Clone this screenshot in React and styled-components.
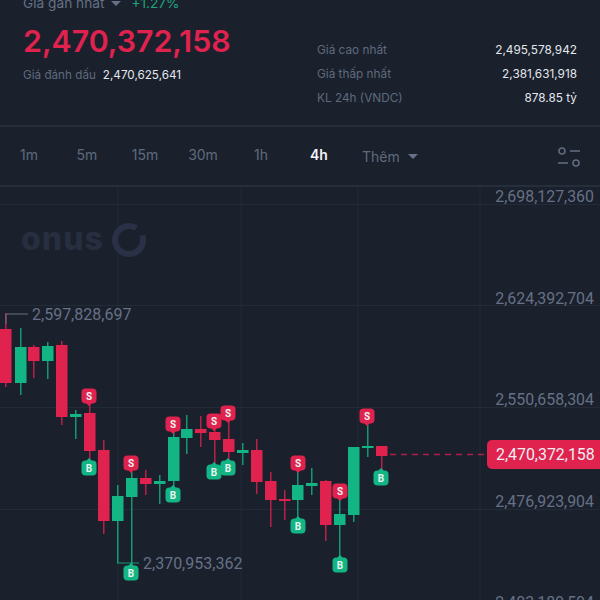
import React from "react";
import styled, { createGlobalStyle } from "styled-components";

const GlobalStyle = createGlobalStyle`
  html, body {
    margin: 0;
    padding: 0;
    width: 600px;
    height: 600px;
    overflow: hidden;
    background: #1a202c;
  }
`;

const Screen = styled.div`
  width: 600px;
  height: 600px;
  overflow: hidden;
  background: #1a202c;
  font-family: Inter, "Noto Sans", sans-serif;
  display: flex;
  flex-direction: column;
`;

const Header = styled.header`
  height: 127px;
  flex: none;
  box-sizing: border-box;
  padding: 0 23px 0 23px;
  display: flex;
  justify-content: space-between;
  border-bottom: 2px solid #262e3c;
`;

const PriceBlock = styled.div`
  display: flex;
  flex-direction: column;
`;

const LastRow = styled.div`
  display: flex;
  align-items: center;
  gap: 7px;
  height: 16px;
  margin-top: -5px;
  font-size: 13.7px;
  color: #667185;
`;

const Caret = styled.span`
  width: 0;
  height: 0;
  border-left: ${(p) => p.$size}px solid transparent;
  border-right: ${(p) => p.$size}px solid transparent;
  border-top: ${(p) => p.$size}px solid #667185;
`;

const Change = styled.span`
  color: #1aa57d;
  margin-left: 3px;
`;

const BigPrice = styled.div`
  margin-top: 12px;
  font-size: 30.3px;
  line-height: 36px;
  font-weight: 600;
  color: #e0224f;
`;

const MarkRow = styled.div`
  display: flex;
  gap: 7px;
  margin-top: 8px;
  font-size: 11.7px;
  line-height: 16px;
`;

const Dim = styled.span`
  color: #5f6b7d;
`;

const Value = styled.span`
  color: #e4e7ec;
`;

const Stats = styled.div`
  width: 260px;
  margin-top: 42px;
  display: flex;
  flex-direction: column;
  gap: 8px;
`;

const StatRow = styled.div`
  display: flex;
  justify-content: space-between;
  font-size: 11.8px;
  line-height: 16px;
`;

const TabBar = styled.nav`
  height: 60px;
  flex: none;
  box-sizing: border-box;
  display: flex;
  align-items: center;
  padding: 0 19px 4px 0;
  border-bottom: 2px solid #262e3c;
`;

const Tab = styled.span`
  width: 58px;
  text-align: center;
  font-size: 14px;
  font-weight: ${(p) => (p.$active ? 600 : 400)};
  color: ${(p) => (p.$active ? "#f2f4f7" : "#5f6b7d")};
`;

const More = styled.span`
  margin: 4px 0 0 14px;
  display: flex;
  align-items: center;
  gap: 8px;
  font-size: 14px;
  color: #5f6b7d;
`;

const FilterIcon = styled.svg`
  margin: 6px 0 0 auto;
  display: block;
`;

const Chart = styled.div`
  position: relative;
  flex: 1;
`;

const ChartSvg = styled.svg`
  display: block;
`;

const Axis = styled.div`
  position: absolute;
  top: 0;
  right: 6px;
  display: flex;
  flex-direction: column;
  align-items: flex-end;
  gap: 82.5px;
  font-family: Roboto, sans-serif;
  font-size: 15.9px;
  line-height: 19px;
  color: #667185;
`;

const PriceTag = styled.div`
  position: absolute;
  top: 253px;
  left: 487px;
  width: 113px;
  height: 29px;
  box-sizing: border-box;
  padding-left: 9px;
  border-radius: 5px 0 0 5px;
  background: #e0224f;
  color: #eceef2;
  font-family: Roboto, sans-serif;
  font-size: 15.9px;
  line-height: 29px;
`;

const Watermark = styled.div`
  position: absolute;
  top: 32px;
  left: 21px;
  font-family: Inter, sans-serif;
  font-size: 32px;
  line-height: 40px;
  font-weight: 800;
  letter-spacing: 1px;
  color: #272e3f;
`;

const RED = "#e0224f";
const GREEN = "#14b585";
const TOP = 187;

// x, body top, body bottom, wick top, wick bottom (page coordinates)
const candles = [
  [0, 329, 383, 313, 387, "r"],
  [15, 347, 383, 328, 395, "g"],
  [28, 347, 361, 345, 378, "r"],
  [42, 346, 361, 342, 379, "g"],
  [56, 345, 417, 341, 425, "r"],
  [70, 414, 417, 410, 439, "g"],
  [84, 413, 451, 403, 461, "r"],
  [98, 450, 521, 440, 534, "r"],
  [112, 496, 521, 485, 563, "g"],
  [126, 478, 497, 472, 568, "g"],
  [140, 478, 484, 470, 495, "r"],
  [154, 481, 484, 475, 504, "g"],
  [168, 437, 481, 431, 488, "g"],
  [181, 429, 438, 415, 454, "g"],
  [195, 429, 433, 416, 447, "r"],
  [209, 432, 440, 425, 468, "r"],
  [223, 439, 452, 418, 462, "r"],
  [237, 450, 453, 443, 465, "g"],
  [251, 450, 482, 439, 494, "r"],
  [265, 481, 500, 472, 527, "r"],
  [279, 499, 501, 490, 520, "r"],
  [292, 485, 500, 470, 522, "g"],
  [306, 483, 486, 468, 495, "g"],
  [320, 481, 525, 480, 541, "r"],
  [334, 514, 525, 498, 562, "g"],
  [348, 447, 515, 447, 522, "g"],
  [362, 446, 448, 425, 457, "g"],
  [376, 446, 456, 446, 470, "r"],
];

const badges = [
  [89, 396, "S"], [89, 468, "B"], [131, 463, "S"], [131, 573, "B"],
  [173, 424, "S"], [173, 495, "B"], [214, 421, "S"], [214, 472, "B"],
  [228, 413, "S"], [228, 468, "B"], [298, 463, "S"], [298, 526, "B"],
  [340, 491, "S"], [340, 565, "B"], [367, 416, "S"], [381, 478, "B"],
];

const Candle = ({ c }) => {
  const [x, top, bottom, wickTop, wickBottom, kind] = c;
  const color = kind === "r" ? RED : GREEN;
  return (
    <g fill={color}>
      <rect x={x + 5} y={wickTop - TOP} width="1.5" height={wickBottom - wickTop} opacity="0.8" />
      <rect x={x} y={top - TOP} width="11.5" height={bottom - top} />
    </g>
  );
};

// small rounded flag with a little point towards its candle
const Badge = ({ b }) => {
  const [x, y, label] = b;
  const sell = label === "S";
  const cy = y - TOP;
  return (
    <g>
      <rect x={x - 7.5} y={cy - 7.5} width="15" height="15" rx="4" fill={sell ? RED : GREEN} />
      <path
        d={sell ? `M${x - 3} ${cy + 7}L${x} ${cy + 10}L${x + 3} ${cy + 7}Z` : `M${x - 3} ${cy - 7}L${x} ${cy - 10}L${x + 3} ${cy - 7}Z`}
        fill={sell ? RED : GREEN}
      />
      <text x={x} y={cy + 3.5} textAnchor="middle" fontFamily="Roboto, sans-serif" fontSize="10" fontWeight="700" fill="#e8f3ef">
        {label}
      </text>
    </g>
  );
};

const stats = [
  ["Giá cao nhất", "2,495,578,942"],
  ["Giá thấp nhất", "2,381,631,918"],
  ["KL 24h (VNDC)", "878.85 tỷ"],
];

const tabs = ["1m", "5m", "15m", "30m", "1h", "4h"];
const axis = ["2,698,127,360", "2,624,392,704", "2,550,658,304", "2,476,923,904", "2,403,189,504"];

export default function App() {
  return (
    <Screen>
      <GlobalStyle />
      <Header>
        <PriceBlock>
          <LastRow>
            Giá gần nhất <Caret $size={5} /> <Change>+1.27%</Change>
          </LastRow>
          <BigPrice>2,470,372,158</BigPrice>
          <MarkRow>
            <Dim>Giá đánh dấu</Dim>
            <Value>2,470,625,641</Value>
          </MarkRow>
        </PriceBlock>
        <Stats>
          {stats.map(([label, value]) => (
            <StatRow key={label}>
              <Dim>{label}</Dim>
              <Value>{value}</Value>
            </StatRow>
          ))}
        </Stats>
      </Header>

      <TabBar>
        {tabs.map((t) => (
          <Tab key={t} $active={t === "4h"}>{t}</Tab>
        ))}
        <More>
          Thêm <Caret $size={5} />
        </More>
        <FilterIcon width="24" height="22" viewBox="0 0 24 22" fill="none" stroke="#5f6b7d" strokeWidth="1.6">
          <circle cx="5" cy="5" r="3" />
          <path d="M13 5h10" />
          <path d="M1 17h10" />
          <circle cx="19" cy="17" r="3" />
        </FilterIcon>
      </TabBar>

      <Chart>
        <ChartSvg width="600" height="413" viewBox="0 0 600 413">
          <g stroke="#232a38" strokeWidth="1">
            {[118, 241, 358, 480].map((x) => (
              <line key={x} x1={x} y1="0" x2={x} y2="413" />
            ))}
            {[17, 118, 220, 322].map((y) => (
              <line key={y} x1="0" y1={y + 0.5} x2="600" y2={y + 0.5} />
            ))}
          </g>
          <circle
            cx="129"
            cy="53"
            r="14"
            fill="none"
            stroke="#2a3146"
            strokeWidth="6"
            strokeDasharray="78 10"
            transform="rotate(-20 129 53)"
          />
          {candles.map((c) => (
            <Candle key={c[0]} c={c} />
          ))}
          <path d="M6 137V127H28" fill="none" stroke="#667185" strokeWidth="1" />
          <path d="M117 376H139" fill="none" stroke={GREEN} strokeWidth="1" opacity="0.8" />
          <line x1="390" y1="267.5" x2="487" y2="267.5" stroke={RED} strokeWidth="1.4" strokeDasharray="6 5" opacity="0.75" />
          {badges.map((b) => (
            <Badge key={`${b[0]}${b[2]}`} b={b} />
          ))}
          <g fontFamily="Roboto, sans-serif" fontSize="16" fill="#667185">
            <text x="32" y="133">2,597,828,697</text>
            <text x="143" y="382">2,370,953,362</text>
          </g>
        </ChartSvg>
        <Watermark>onus</Watermark>
        <Axis>
          {axis.map((v) => (
            <span key={v}>{v}</span>
          ))}
        </Axis>
        <PriceTag>2,470,372,158</PriceTag>
      </Chart>
    </Screen>
  );
}
